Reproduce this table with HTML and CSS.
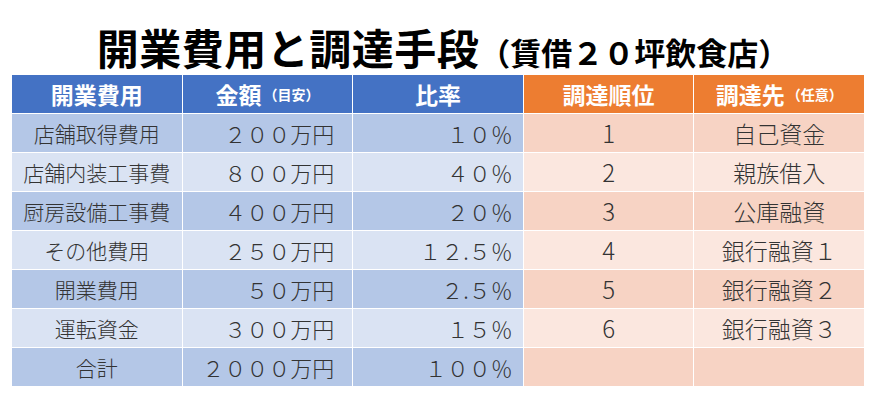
FILE: index.html
```html
<!DOCTYPE html>
<html lang="ja">
<head>
<meta charset="utf-8">
<title>開業費用と調達手段</title>
<link rel="stylesheet" href="styles.css">
</head>
<body>
<h1 class="title"><span class="title-main">開業費用と調達手段</span><span class="title-sub">（賃借２０坪飲食店）</span></h1>
<div class="table">
  <div class="cell head blue">開業費用</div>
  <div class="cell head blue">金額<small>（目安）</small></div>
  <div class="cell head blue">比率</div>
  <div class="cell head orange">調達順位</div>
  <div class="cell head orange">調達先<small>（任意）</small></div>

  <div class="cell b1 name">店舗取得費用</div>
  <div class="cell b1 amt">２００万円</div>
  <div class="cell b1 pct">１０％</div>
  <div class="cell o1 rank">1</div>
  <div class="cell o1 src">自己資金</div>

  <div class="cell b2 name">店舗内装工事費</div>
  <div class="cell b2 amt">８００万円</div>
  <div class="cell b2 pct">４０％</div>
  <div class="cell o2 rank">2</div>
  <div class="cell o2 src">親族借入</div>

  <div class="cell b1 name">厨房設備工事費</div>
  <div class="cell b1 amt">４００万円</div>
  <div class="cell b1 pct">２０％</div>
  <div class="cell o1 rank">3</div>
  <div class="cell o1 src">公庫融資</div>

  <div class="cell b2 name">その他費用</div>
  <div class="cell b2 amt">２５０万円</div>
  <div class="cell b2 pct">１２.５％</div>
  <div class="cell o2 rank">4</div>
  <div class="cell o2 src">銀行融資１</div>

  <div class="cell b1 name">開業費用</div>
  <div class="cell b1 amt">５０万円</div>
  <div class="cell b1 pct">２.５％</div>
  <div class="cell o1 rank">5</div>
  <div class="cell o1 src">銀行融資２</div>

  <div class="cell b2 name">運転資金</div>
  <div class="cell b2 amt">３００万円</div>
  <div class="cell b2 pct">１５％</div>
  <div class="cell o2 rank">6</div>
  <div class="cell o2 src">銀行融資３</div>

  <div class="cell b1 name">合計</div>
  <div class="cell b1 amt">２０００万円</div>
  <div class="cell b1 pct">１００％</div>
  <div class="cell o1 rank"></div>
  <div class="cell o1 src"></div>
</div>
</body>
</html>
```
FILE: styles.css
```css
html, body {
  margin: 0;
  padding: 0;
  background: #ffffff;
}
body {
  font-family: "Noto Sans CJK JP", "Noto Sans", sans-serif;
  color: #333333;
  width: 876px;
  height: 402px;
  overflow: hidden;
}
.title {
  margin: 0;
  padding: 22px 0 0 10px;
  height: 53px;
  line-height: 50px;
  text-align: center;
  font-weight: 700;
  color: #000;
  white-space: nowrap;
}
.title-main {
  font-size: 42px;
  letter-spacing: 0.5px;
}
.title-sub {
  font-size: 31px;
}
.table {
  margin-left: 12px;
  width: 852px;
  display: grid;
  grid-template-columns: repeat(5, 1fr);
  grid-auto-rows: 38px;
  gap: 1px;
}
.cell {
  display: flex;
  align-items: center;
  font-size: 21px;
  font-weight: 300;
  line-height: 1;
  white-space: nowrap;
}
.name { justify-content: center; font-size: 21px; }
.amt { justify-content: flex-end; padding-right: 18px; font-size: 22px; }
.pct { justify-content: flex-end; padding-right: 10px; font-size: 22px; }
.rank { justify-content: center; font-size: 24px; }
.src { justify-content: center; font-size: 23px; }
.head {
  justify-content: center;
  color: #fff;
  font-weight: 700;
  font-size: 23px;
}
.head small {
  font-size: 14px;
  font-weight: 700;
  margin-left: 2px;
}
.blue { background: #4472c4; }
.orange { background: #ed7d31; }
.b1 { background: #b4c7e7; }
.b2 { background: #dae3f3; }
.o1 { background: #f7d3c4; }
.o2 { background: #fbe7df; }
```
